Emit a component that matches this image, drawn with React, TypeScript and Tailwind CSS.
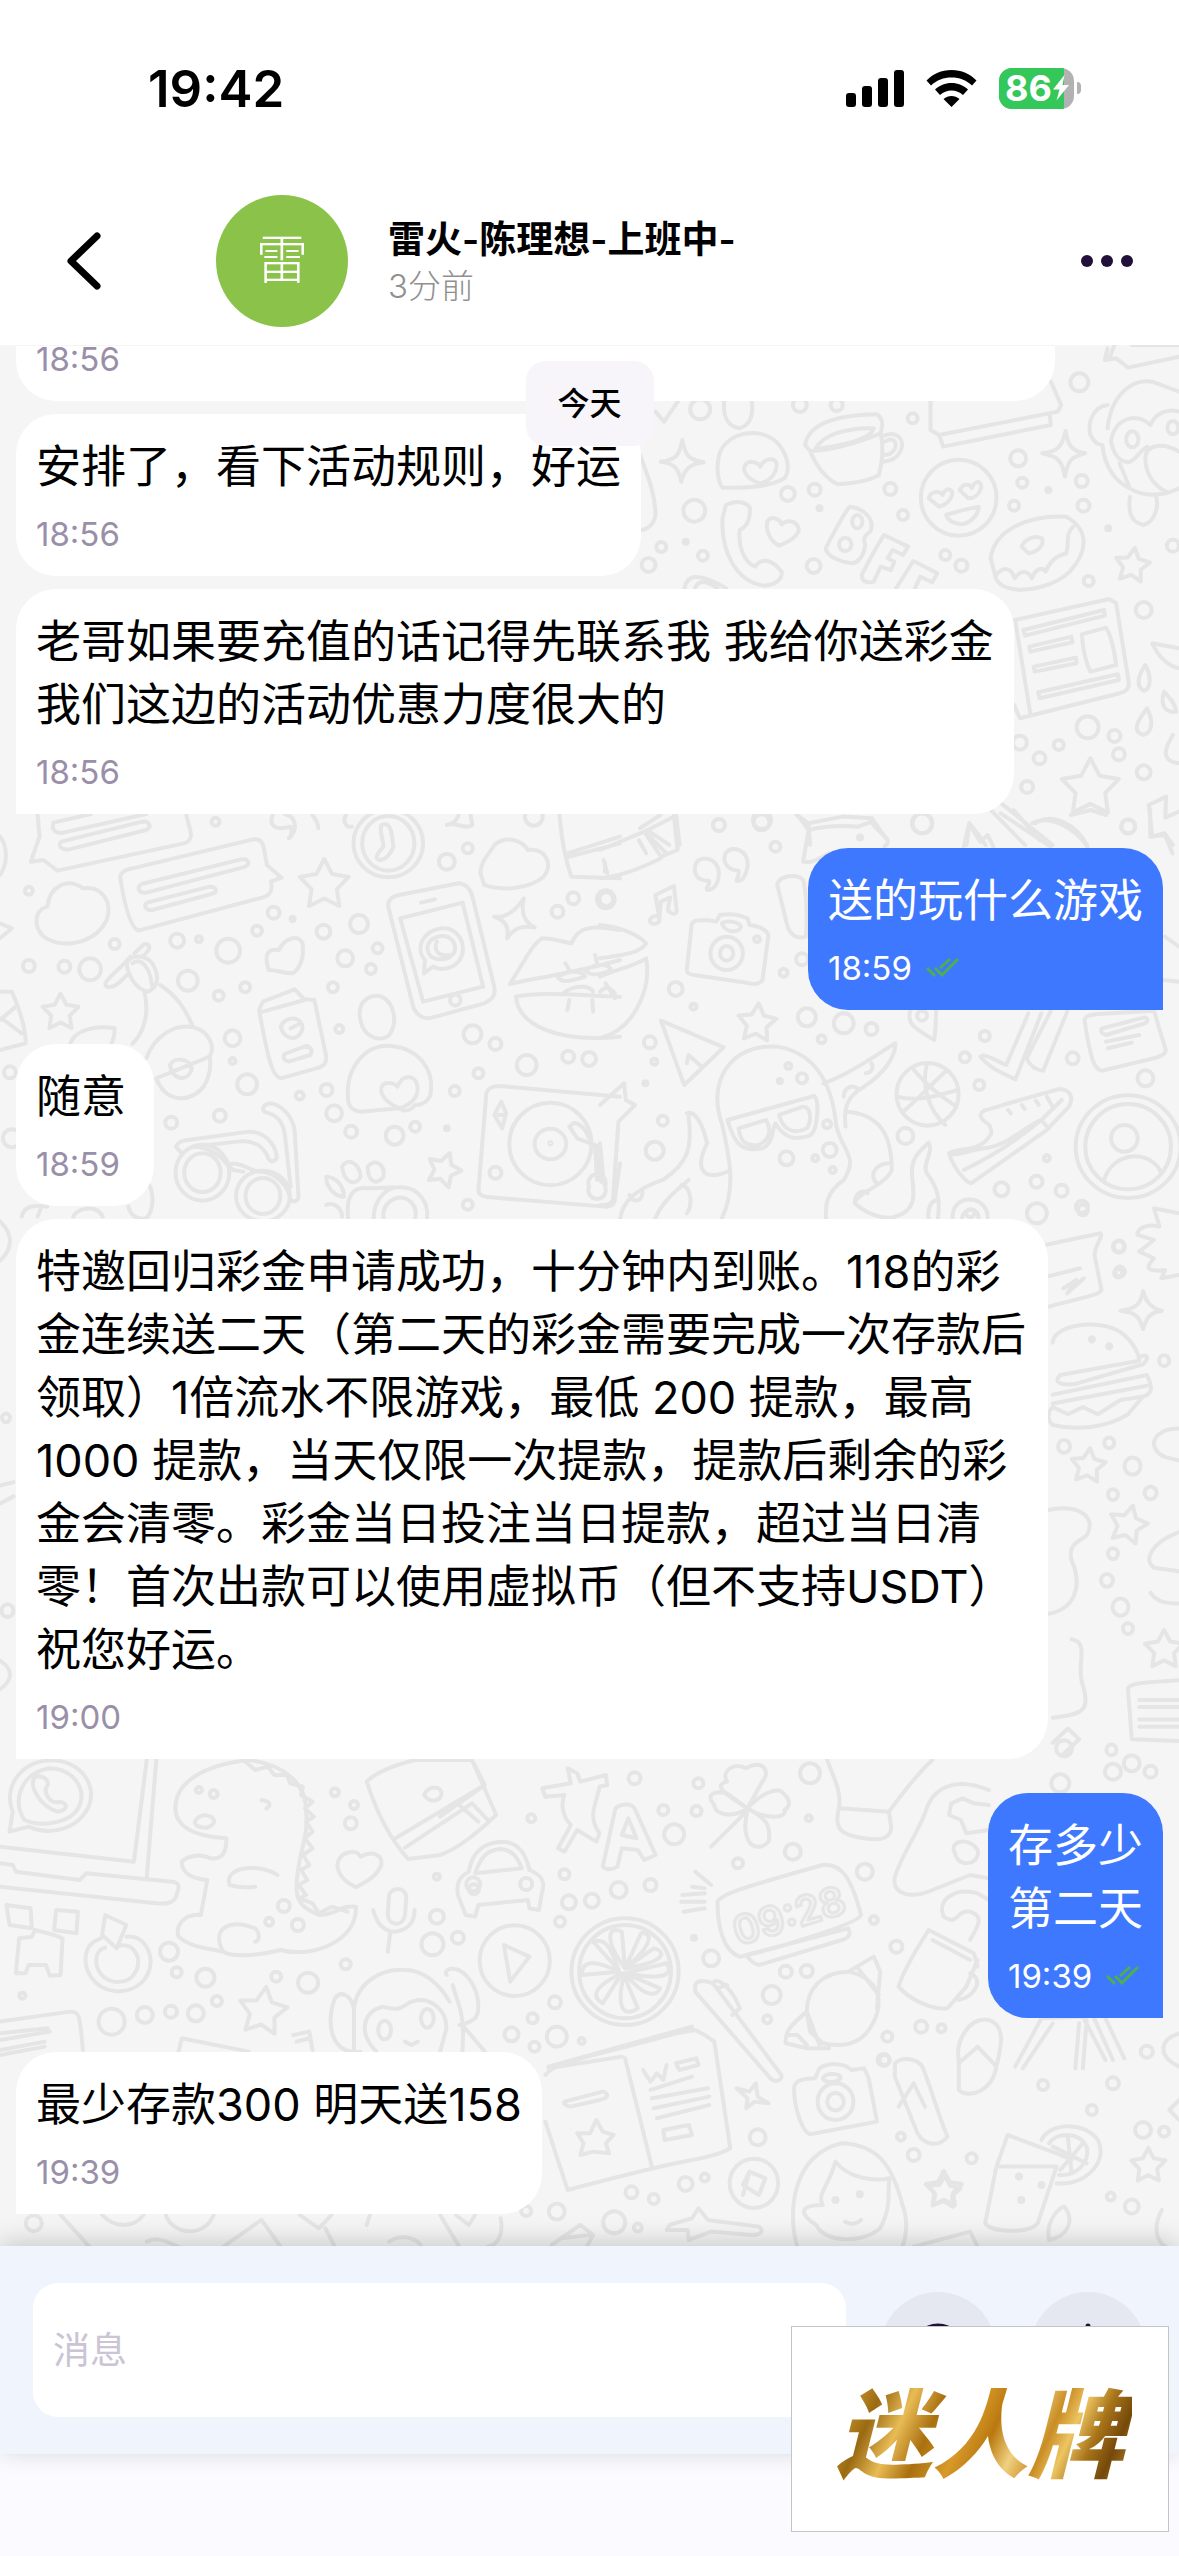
import React from "react";
import clsx from "clsx";

const ink = "fill-none stroke-[#e5e5e5]";

type Pt = [number, number, number];

/** Round bubbles scattered between the doodles; radii are compensated for the group scale. */
function Dots({ items, sx }: { items: Pt[]; sx: number }) {
  return (
    <>
      {items.map(([x, y, r]) => (
        <ellipse key={`${x}-${y}`} cx={x} cy={y} rx={r * sx} ry={r * 3} vectorEffect="non-scaling-stroke" />
      ))}
    </>
  );
}

/** A list of outline strokes sharing one group scale. */
function Lines({ d }: { d: string[] }) {
  return (
    <>
      {d.map((p) => (
        <path key={p} d={p} vectorEffect="non-scaling-stroke" />
      ))}
    </>
  );
}

function Star({ x, y, r, sx, sy = 3, a = 0 }: { x: number; y: number; r: number; sx: number; sy?: number; a?: number }) {
  const pts = Array.from({ length: 10 }, (_, i) => {
    const rad = ((i * 36 - 90 + a) * Math.PI) / 180;
    const k = i % 2 ? r * 0.52 : r;
    return `${x + Math.cos(rad) * k * sx},${y + Math.sin(rad) * k * sy}`;
  }).join(" ");
  return <polygon points={pts} vectorEffect="non-scaling-stroke" />;
}

function Wallpaper() {
  return (
    <svg
      aria-hidden="true"
      className={clsx("absolute inset-0 h-full w-full", ink)}
      viewBox="0 345 1179 1901"
      preserveAspectRatio="xMidYMin slice"
      strokeWidth="4"
      strokeLinecap="round"
      strokeLinejoin="round"
    >
      {/* upper right: cup, smiley, donut, newspaper, monkey */}
      <g transform="translate(640 345) scale(0.3438 0.3333)">
        <Lines
          d={[
            "M480 300C490 240 560 210 690 208C710 225 705 245 700 265C640 290 560 315 495 318ZM495 318C510 360 540 400 575 418C620 415 670 405 695 390C705 350 708 300 700 262M510 312C530 270 600 248 680 250C670 280 600 300 510 312",
            "M702 275C740 255 765 275 762 305C755 335 735 350 702 350M712 290C735 275 748 290 742 310C736 325 725 330 710 330",
            "M240 428C220 400 220 330 245 300C290 250 370 255 405 300C435 340 435 380 420 400C380 425 300 430 240 428ZM350 415C300 400 290 360 320 350C345 350 350 365 350 365C360 340 390 335 397 355C400 385 375 410 350 415",
            "M845 165V255L870 270L882 305L1195 240L1192 208M870 270L1215 200L1225 180L1195 110",
            "M840 460C845 440 870 435 880 450C890 425 910 430 908 448C905 465 890 480 870 485ZM930 435C940 415 960 415 965 430C975 405 995 405 992 430C985 450 970 460 955 460ZM890 510C920 500 960 490 985 485C985 510 960 535 935 538C910 535 895 525 890 510Z",
            "M1020 640C1030 560 1120 510 1240 515C1300 550 1310 610 1250 680C1190 740 1060 755 1035 700ZM1035 690C1060 660 1080 670 1090 700C1110 670 1130 680 1140 700C1150 670 1170 665 1180 680C1195 640 1220 630 1240 625C1250 590 1235 570 1260 545",
            "M1110 605C1120 580 1150 570 1170 580C1175 600 1160 620 1130 625Z",
            "M250 480C280 465 310 470 320 490C320 520 315 545 290 555C285 600 300 650 335 665C355 635 385 645 412 680C415 705 390 720 360 722C280 710 235 620 240 520Z",
            "M370 530C380 510 405 520 412 538C430 520 460 530 462 555C455 580 430 590 405 602C380 590 365 560 370 530Z",
            "M540 610C560 570 590 510 610 485C650 490 685 520 670 560C650 575 650 580 655 600C650 640 630 655 615 655C580 650 545 635 540 610Z",
            "M645 690C665 650 690 600 710 570L780 605L765 630L735 615L720 640L740 650L730 675L700 665L680 710C660 715 645 710 645 690Z",
            "M745 730L795 648L865 685L850 712L815 695L800 730",
            "M1090 825L1365 762L1385 775L1422 1015C1422 1035 1410 1040 1395 1045L1105 1120L1088 1080M1092 830L1135 1105",
            "M1115 855L1350 795L1352 812L1120 872ZM1132 905L1255 875L1258 892L1135 920ZM1145 965L1268 938L1270 955L1148 980ZM1158 1042L1390 988L1393 1005L1162 1060ZM1285 868L1355 848C1370 870 1380 920 1385 960L1310 980C1295 950 1288 910 1285 868Z",
            "M1360 250C1370 150 1430 100 1490 110L1568 140M1360 180C1320 185 1300 230 1310 270C1320 290 1330 300 1345 300C1350 360 1380 410 1425 430M1370 290C1380 220 1440 200 1485 240C1500 200 1540 190 1568 200M1370 290C1380 340 1400 350 1420 352C1440 350 1450 320 1475 305M1395 355L1425 430C1470 460 1530 450 1568 430M1470 340C1470 300 1520 290 1568 320M1470 340C1470 380 1490 420 1530 440M1425 455C1420 500 1425 530 1465 540C1500 530 1510 480 1500 450",
            "M60 350C100 345 115 335 123 285C132 335 145 345 185 352C145 358 130 370 120 410C112 370 100 355 60 350Z",
            "M1170 325C1215 320 1228 305 1238 258C1245 305 1260 320 1295 325C1255 335 1245 345 1236 395C1228 345 1215 335 1170 325Z",
            "M245 170C240 220 260 245 290 250C320 240 330 210 325 170M45 200L70 230L110 170M0 330C25 400 45 450 45 510C40 540 20 555 0 555M130 730C135 690 170 680 250 730M160 730C170 705 190 705 225 730",
            "M1360 10L1352 45L1385 40L1420 68L1568 35M1380 0L1365 40M1430 0L1568 0",
            "M1490 895L1568 910M1490 895C1510 940 1540 965 1568 970M1470 960C1450 990 1440 1020 1465 1038C1490 1030 1485 990 1470 960ZM1475 1090C1445 1130 1430 1160 1465 1170C1495 1160 1490 1120 1475 1090ZM1525 1040C1510 1080 1530 1105 1560 1100C1555 1070 1540 1060 1525 1040ZM1550 1170C1520 1220 1520 1250 1568 1255",
            "M1480 1380L1530 1355L1528 1418L1568 1400M1480 1380L1490 1475L1525 1465L1550 1500",
            "M455 1410L490 1435L495 1500M490 1435L590 1415L675 1420L715 1480M0 1450L60 1410M20 1455L85 1500M105 1410L115 1500M950 1500L958 1435L985 1470L1005 1500M1045 1370L1200 1500M1020 1395L1120 1500M1150 1435C1200 1400 1270 1440 1300 1500",
          ]}
        />
        <ellipse cx="927" cy="458" rx="110" ry="114" vectorEffect="non-scaling-stroke" />
        <ellipse cx="632" cy="530" rx="15" ry="20" vectorEffect="non-scaling-stroke" />
        <ellipse cx="597" cy="598" rx="18" ry="20" vectorEffect="non-scaling-stroke" />
        <ellipse cx="1432" cy="283" rx="18" ry="24" vectorEffect="non-scaling-stroke" />
        <ellipse cx="1550" cy="248" rx="16" ry="20" vectorEffect="non-scaling-stroke" />
        <Star x={1432} y={662} r={18} sx={2.9} a={8} />
        <Star x={1310} y={1330} r={30} sx={2.9} />
        <Dots
          sx={2.9}
          items={[
            [175, 193, 10], [465, 180, 7], [572, 180, 6], [793, 220, 5], [1278, 112, 9], [1100, 340, 8], [158, 497, 11],
            [430, 447, 7], [508, 434, 6], [728, 432, 6], [522, 490, 2], [765, 510, 5], [1112, 413, 5], [1188, 435, 2],
            [1285, 408, 6], [1088, 482, 5], [1290, 482, 6], [1362, 550, 2], [62, 606, 5], [133, 590, 2], [183, 632, 5],
            [25, 660, 7], [505, 663, 7], [888, 630, 5], [935, 662, 6], [1305, 708, 5], [1465, 795, 8], [1550, 602, 6],
            [1302, 1147, 11], [1380, 1173, 6], [1105, 1193, 7], [1218, 1200, 5], [1162, 1240, 6], [1393, 1228, 6],
            [1465, 1282, 7], [1126, 1326, 6], [1420, 1444, 7], [820, 1435, 10], [355, 1425, 9], [230, 1440, 6], [640, 1478, 2],
          ]}
        />
      </g>

      {/* middle left: chat balloons, phone, lips, lamp, glasses, turntable */}
      <g transform="translate(0 810) scale(0.3954 0.3333)">
        <Lines
          d={[
            "M95 10L100 80L78 155L110 150L145 182L465 100C480 95 485 80 482 65L470 10M135 38L230 12M135 38C130 60 140 72 160 68L370 12M155 95L360 35C378 32 385 50 370 60L175 118C155 122 145 105 155 95Z",
            "M305 210C300 190 315 180 335 175L640 88C660 85 665 100 668 120L675 165L712 203L685 215C690 240 685 255 665 262L350 362C335 355 320 320 305 210ZM358 222L610 148C630 145 635 165 615 172L370 248C350 250 345 232 358 222ZM372 278L530 230C550 230 550 248 535 252L385 300C368 302 362 285 372 278Z",
            "M120 290C125 230 170 200 210 235C260 225 285 280 270 330C240 400 160 420 110 380C85 350 85 300 120 290Z",
            "M965 45C985 35 990 55 995 110C990 130 975 150 960 150C945 145 955 130 970 110C968 80 958 60 965 45Z",
            "M982 290C980 270 990 260 1010 255L1160 220C1180 222 1190 240 1195 260L1250 530C1255 555 1245 570 1225 580L1085 625C1065 625 1050 610 1045 590ZM1012 325L1170 278L1222 530L1070 575ZM1065 278L1100 268M1138 570A13 16 0 1 0 1165 570A13 16 0 1 0 1138 570",
            "M1115 355C1150 350 1175 385 1170 430C1160 475 1120 485 1095 470L1072 490L1075 450C1050 420 1065 365 1115 355ZM1115 378C1140 375 1155 400 1150 425C1135 455 1105 450 1090 440C1070 410 1085 385 1115 378ZM1105 395C1095 420 1110 440 1135 435",
            "M1215 190C1215 150 1240 130 1250 105C1280 75 1320 90 1335 120C1380 115 1400 160 1375 200C1340 235 1270 245 1225 225Z",
            "M1290 520C1320 470 1340 410 1370 385C1400 385 1420 395 1445 400C1460 360 1480 340 1568 360M1290 522C1350 505 1450 490 1568 450M1305 560C1360 545 1450 555 1568 560M1305 560C1310 640 1400 700 1568 680M1410 500C1440 480 1470 480 1480 500C1440 515 1420 520 1410 500ZM1480 480C1510 460 1540 460 1545 480C1520 495 1490 500 1480 480ZM1425 550C1450 525 1490 525 1500 545M1430 460L1440 480M1505 435L1510 460M1440 570L1435 600M1498 570L1500 605",
            "M1250 320C1280 325 1305 300 1325 265C1315 310 1330 340 1352 352C1320 345 1300 355 1282 385C1290 350 1275 330 1250 320Z",
            "M270 530C260 520 270 510 315 460L330 440M270 530C290 535 300 520 325 490M340 430L365 402C380 400 385 415 360 440M320 460C330 430 370 435 385 460C405 500 400 530 375 545C345 540 325 500 320 460ZM335 460C355 440 380 470 385 530M365 545C380 620 360 670 335 702M405 525C450 560 470 600 488 650M370 745C390 680 440 640 490 652C530 665 545 710 530 740L395 805M395 805C420 880 480 880 515 830C530 800 535 770 530 740M430 765C440 740 480 745 485 775C480 815 435 815 430 765ZM178 700C190 660 240 645 290 655C290 680 285 695 280 705",
            "M655 600L665 575L745 538L770 568L795 570C800 600 815 680 825 740C825 765 815 770 800 775L710 805C690 800 680 760 655 600ZM665 605L770 570M720 732L775 708C790 715 790 725 785 735L730 755C715 750 715 740 720 732ZM710 650C720 620 760 615 765 650C765 690 720 700 710 650M735 655L760 640",
            "M910 620C905 570 940 550 965 560C1000 580 1005 640 985 675C960 700 915 680 910 620Z",
            "M880 860C875 780 920 700 990 708C1060 715 1095 780 1090 840C1090 870 1070 885 1050 885C1035 905 1020 905 1010 895L910 905C890 900 880 890 880 860ZM1010 895C960 870 955 830 975 820C995 815 1000 825 1005 830C1020 790 1050 795 1055 825C1060 850 1050 880 1010 895",
            "M445 1010C450 995 460 992 475 990L630 965C680 965 700 1020 700 1045C690 1060 680 1055 675 1035C660 1000 630 990 600 995L490 1010M445 1010L460 1030M490 1010C530 1010 560 1040 575 1065C610 1050 640 1090 660 1085C700 1090 730 1130 735 1170C745 1180 755 1170 755 1160L745 960C740 920 710 880 680 880C660 890 660 905 680 910C710 920 720 950 722 990L735 1130M575 1065L590 1080L615 1085",
            "M680 480C665 430 680 415 705 420C720 385 755 370 765 400C770 440 760 475 740 490C715 490 700 480 680 480Z",
            "M1230 850C1235 830 1250 828 1265 828L1568 860M1230 850L1210 1140C1210 1155 1220 1160 1240 1162L1530 1190C1550 1190 1555 1180 1555 1165L1568 1060M1440 950L1460 985L1515 1010L1520 1115M1445 945C1455 930 1480 950 1490 985M1505 1010L1510 1110M1490 1130A22 26 0 1 0 1530 1130A22 26 0 1 0 1490 1130M1268 875L1250 915L1270 955L1280 910ZM1262 915H1275",
            "M825 1100C850 1100 870 1130 870 1160C845 1160 825 1130 825 1100ZM865 1070C880 1040 910 1060 912 1100C900 1130 870 1120 865 1070ZM930 1070C945 1045 975 1060 970 1100C955 1125 930 1120 930 1070ZM825 1185C845 1175 865 1195 865 1220M880 1225C875 1160 890 1130 930 1135L1010 1132C1060 1130 1085 1180 1080 1225M945 1225C945 1160 985 1130 1010 1132M970 1225C965 1180 1000 1155 1025 1165C1050 1180 1055 1200 1050 1225",
            "M1415 15C1420 90 1430 150 1445 200L1568 205M1440 140L1568 100M1435 130L1568 80M1530 160V185",
            "M0 545H30C50 600 65 660 65 700L0 720M0 630L40 590M10 630L55 670M0 340L30 355L0 385M0 80C20 110 20 160 0 195",
            "M55 1220C60 1190 80 1185 120 1190M95 1220L105 1190M185 1220C200 1190 245 1185 260 1220M325 1190C330 1220 350 1230 370 1225C390 1200 390 1150 375 1120",
            "M690 15C680 40 690 65 735 50C740 70 735 85 730 85M720 12C750 20 755 60 730 85M790 15C800 30 805 45 805 55M875 15C865 30 875 55 890 50",
            "M1130 45C1150 40 1155 30 1160 15M1130 45C1150 35 1180 60 1195 45L1190 15",
          ]}
        />
        <ellipse cx="982" cy="100" rx="88" ry="102" vectorEffect="non-scaling-stroke" />
        <ellipse cx="982" cy="100" rx="66" ry="82" vectorEffect="non-scaling-stroke" />
        <ellipse cx="512" cy="1088" rx="68" ry="84" vectorEffect="non-scaling-stroke" />
        <ellipse cx="512" cy="1088" rx="46" ry="58" vectorEffect="non-scaling-stroke" />
        <ellipse cx="665" cy="1158" rx="68" ry="76" vectorEffect="non-scaling-stroke" />
        <ellipse cx="665" cy="1158" rx="44" ry="54" vectorEffect="non-scaling-stroke" />
        <ellipse cx="1392" cy="1002" rx="104" ry="124" vectorEffect="non-scaling-stroke" />
        <ellipse cx="1392" cy="1002" rx="40" ry="46" vectorEffect="non-scaling-stroke" />
        <Star x={820} y={225} r={26} sx={2.5} />
        <Star x={153} y={608} r={19} sx={2.5} />
        <Star x={1122} y={1080} r={18} sx={2.5} a={20} />
        <Dots
          sx={2.5}
          items={[
            [73, 242, 4], [545, 35, 4], [1130, 155, 8], [1183, 115, 5], [692, 308, 6], [740, 327, 2], [650, 362, 5],
            [818, 365, 7], [908, 342, 9], [290, 402, 5], [448, 392, 7], [503, 388, 3], [577, 422, 12], [73, 468, 6],
            [163, 470, 6], [228, 478, 11], [475, 512, 10], [873, 445, 8], [955, 415, 5], [938, 477, 5], [620, 532, 5],
            [553, 557, 5], [842, 532, 5], [588, 685, 8], [858, 657, 4], [588, 753, 3], [1195, 673, 9], [1253, 702, 6],
            [1332, 765, 10], [1437, 740, 6], [1490, 747, 7], [1210, 790, 5], [625, 823, 10], [758, 857, 4], [826, 840, 6],
            [1150, 843, 5], [845, 910, 8], [433, 938, 6], [556, 917, 6], [888, 965, 6], [998, 977, 9], [1050, 950, 5],
            [1130, 955, 2], [1253, 1088, 6], [1183, 1184, 5], [1392, 1000, 1], [1410, 305, 6], [1450, 265, 6],
            [1532, 268, 9], [25, 787, 6], [30, 985, 9], [1350, 20, 9],
          ]}
        />
      </g>

      {/* middle right: camera, octopus, basketball, sneaker, contact */}
      <g transform="translate(600 810) scale(0.3693 0.3333)">
        <Lines
          d={[
            "M0 120L120 65L165 140L210 120L200 15M120 65L200 20M130 75L180 130M0 205C60 200 120 170 165 145M105 90L125 130M10 150L20 190",
            "M260 160C270 135 320 140 322 190C320 220 310 240 290 240C285 230 300 225 295 212C265 215 250 190 260 160ZM340 130C355 105 400 115 400 165C395 200 385 215 370 212C370 200 380 195 375 182C345 180 330 155 340 130Z",
            "M135 330C140 315 155 318 160 320L150 255L200 228L208 305C200 320 180 305 185 290L190 262L165 275L160 335C150 345 135 345 135 330",
            "M235 480L248 345C250 330 265 330 290 330L315 335L325 315C350 310 380 315 400 325L405 345C440 350 460 365 455 385L440 510C435 520 420 525 405 520L255 495C240 492 235 490 235 480ZM330 340C345 330 375 335 382 350C375 370 340 370 330 340Z",
            "M480 225C485 195 535 190 550 210C560 250 560 330 558 380C530 390 515 370 508 350Z",
            "M165 632L335 712L228 825ZM240 735L275 770M240 735L235 760",
            "M330 940C290 820 350 700 480 710C590 730 630 830 640 950C660 1030 700 1040 660 1110C610 1150 610 1190 612 1225M605 820C680 790 740 740 800 700C800 740 770 790 715 830C665 860 660 900 665 950M330 940C350 1040 370 1130 330 1225M665 905C760 910 790 980 790 1080C770 1130 690 1150 690 1180C740 1230 790 1225 800 1220C860 1200 850 1150 845 1100C840 1040 870 1020 890 998C905 1030 870 1060 885 1090C920 1140 920 1180 915 1225M235 910C260 900 280 950 290 1000C250 1090 290 1110 345 1085M240 920C250 1010 240 1060 170 1110C90 1140 60 1180 55 1225M150 1225C170 1170 210 1140 240 1110M660 860C660 830 690 820 700 840M780 1060C740 1065 730 1100 750 1120M720 790C740 785 740 770 735 760M220 1125C250 1130 250 1190 235 1210M80 1155C95 1185 115 1170 115 1145M690 1180C690 1140 720 1140 725 1150M890 1225C885 1190 900 1170 915 1170",
            "M345 930L580 858C595 870 590 960 570 975C520 1000 490 970 475 940C465 960 470 1000 440 1015C370 1030 360 980 345 930ZM375 955L450 930C465 960 460 990 430 1005C390 1010 380 990 375 955ZM485 915L550 890C570 890 575 930 560 955C525 975 495 960 485 915Z",
            "M1030 915C1035 895 1060 900 1090 885L1240 838C1270 835 1285 860 1270 890L1210 960L1005 1120C990 1115 960 1080 945 1030C980 1010 1030 1030 1060 970C1060 930 1035 945 1030 915ZM945 1030C970 1040 1000 1020 1040 1015C1100 1010 1150 950 1195 930L1250 870M985 1080C1060 1040 1130 990 1195 930M1195 930L1215 955M1210 860L1225 890M1105 900L1112 910M1142 885L1150 897M1180 872L1188 885",
            "M885 762C870 830 890 900 935 945M805 860C860 880 930 850 970 840M850 780C880 820 910 850 965 890M820 905C850 880 900 820 940 780",
            "M1030 740C1040 730 1060 745 1100 765L1160 610M1030 740C1050 770 1090 790 1125 808L1195 610M1155 745L1220 605M1155 745C1165 770 1180 780 1200 782L1265 605",
            "M1312 630C1315 615 1330 615 1350 612L1500 602L1532 720C1530 735 1520 738 1500 745L1360 782C1340 780 1330 760 1312 630ZM1360 655L1475 622C1485 625 1485 635 1475 640L1370 675C1355 670 1355 660 1360 655ZM1370 695L1460 675M1375 715L1440 698",
            "M1365 1110C1390 1020 1490 1020 1518 1085M840 602C830 640 850 655 905 690C910 650 910 620 910 600M0 345C50 350 100 370 125 400C110 430 60 435 0 445M0 500C40 480 90 470 125 445C140 540 90 660 0 685M0 545C15 530 25 530 40 550M15 520L40 565",
            "M0 885L65 820L70 870L95 885L50 935M50 935L35 1170C30 1185 15 1185 0 1185M0 1000L10 1120",
            "M955 1225C950 1150 1050 1150 1050 1225M980 1225C985 1190 1025 1190 1025 1225M1205 1305L1355 1270C1365 1280 1335 1310 1340 1340L1358 1440C1355 1450 1340 1455 1320 1460L1215 1490M1210 1400L1300 1375M1255 1435L1290 1410L1265 1450L1310 1405",
            "M1568 1210L1500 1195L1515 1250C1480 1240 1455 1255 1455 1275L1500 1290L1460 1325L1500 1345C1470 1380 1490 1385 1530 1380L1520 1405L1568 1395",
            "M535 15L565 60L550 155C570 160 590 150 620 130M565 60C600 50 650 45 700 50L735 35C750 70 800 85 770 110M985 110L1000 40C1010 60 1020 80 1030 95L1050 75L1065 110M1085 10L1220 110M1170 40C1220 10 1290 60 1320 110M1490 0V80L1530 75L1550 130M1120 0L1190 90M1275 15L1330 0L1370 15M1530 380L1568 410M1525 510L1568 515",
          ]}
        />
        <ellipse cx="343" cy="430" rx="44" ry="50" vectorEffect="non-scaling-stroke" />
        <ellipse cx="343" cy="430" rx="18" ry="22" vectorEffect="non-scaling-stroke" />
        <ellipse cx="887" cy="853" rx="84" ry="94" vectorEffect="non-scaling-stroke" />
        <ellipse cx="1430" cy="1010" rx="142" ry="154" vectorEffect="non-scaling-stroke" />
        <ellipse cx="1430" cy="1010" rx="116" ry="128" vectorEffect="non-scaling-stroke" />
        <ellipse cx="1420" cy="985" rx="36" ry="40" vectorEffect="non-scaling-stroke" />
        <Star x={425} y={640} r={20} sx={2.7} a={5} />
        <Dots
          sx={2.7}
          items={[
            [322, 45, 6], [437, 37, 8], [475, 110, 5], [873, 40, 10], [1430, 50, 7], [17, 268, 7], [205, 537, 7],
            [497, 488, 4], [253, 590, 3], [425, 388, 3], [547, 448, 6], [560, 622, 9], [660, 640, 10], [735, 657, 6],
            [600, 688, 4], [872, 617, 5], [1042, 678, 5], [135, 697, 6], [147, 755, 3], [123, 820, 2], [510, 768, 3],
            [487, 813, 2], [547, 805, 5], [988, 742, 5], [1280, 745, 6], [1027, 825, 5], [1477, 805, 8], [170, 932, 5],
            [148, 1022, 9], [827, 978, 8], [615, 943, 4], [622, 1020, 7], [583, 1045, 3], [630, 1080, 3], [1210, 1045, 3],
            [1087, 1138, 7], [1182, 1115, 6], [1250, 1142, 6], [1305, 1190, 6], [1183, 1210, 10], [1003, 1210, 4],
            [1405, 1310, 6], [1408, 1385, 5], [505, 1045, 7],
          ]}
        />
      </g>

      {/* right margin: burger, sparkles, small ornaments */}
      <g transform="translate(0 1200) scale(0.752 0.3571)">
        <Lines
          d={[
            "M1400 400C1400 350 1460 330 1490 370C1510 400 1515 440 1515 450L1410 490M1410 490C1400 510 1410 520 1430 515L1520 460C1530 440 1525 430 1515 440M1400 545L1525 490C1535 530 1530 545 1520 550L1500 600C1470 640 1430 645 1400 630C1390 610 1395 590 1400 580L1420 600L1440 580L1460 600L1490 560L1520 550M1400 570L1525 520",
            "M1490 310C1510 305 1518 290 1520 255C1525 295 1535 305 1545 310C1530 315 1525 325 1520 362C1515 325 1510 315 1490 310",
            "M1568 640C1530 640 1525 700 1550 720L1568 730M1390 870C1430 850 1460 880 1445 940C1430 960 1420 970 1425 1010C1440 1080 1430 1150 1390 1160M1568 930C1530 960 1520 1010 1535 1030L1568 1040M1530 1100C1540 1130 1555 1130 1568 1130M1425 1230C1450 1240 1430 1300 1440 1360C1450 1430 1440 1440 1400 1450M1400 1520L1420 1480L1435 1510L1415 1550",
            "M1500 1370C1500 1355 1510 1352 1568 1345M1500 1370L1505 1510L1568 1515M1515 1400H1568M1515 1420H1568M1515 1455H1568M1515 1475H1568",
            "M0 60C15 90 20 130 0 170M0 800L18 790M0 850L18 830M0 1290C15 1310 20 1340 0 1370",
          ]}
        />
        <Star x={1447} y={745} r={18} sx={1.33} sy={2.8} a={6} />
        <Star x={1500} y={910} r={20} sx={1.33} sy={2.8} a={14} />
        <Star x={1548} y={1260} r={20} sx={1.33} sy={2.8} />
        <Dots
          sx={1.33}
          items={[
            [1488, 130, 5], [1487, 205, 4], [1452, 390, 2], [1475, 410, 2], [1548, 450, 5], [1475, 680, 5], [1415, 690, 6],
            [1506, 745, 8], [1480, 825, 5], [1530, 820, 6], [1480, 990, 5], [1472, 1065, 6], [1490, 1140, 8],
            [1500, 1200, 5], [1478, 1540, 5], [1440, 28, 5], [8, 610, 4], [10, 1150, 6],
          ]}
        />
      </g>

      {/* lower left: dinosaur, car, gift, orange, monkey, notebook, portrait */}
      <g transform="translate(0 1755) scale(0.6378 0.3333)">
        <Lines
          d={[
            "M15 230L20 170C5 100 30 20 80 15C130 20 150 90 140 150C125 220 80 245 45 215ZM38 195C20 140 30 60 75 40C115 40 135 100 125 150C115 200 70 220 38 195ZM55 65C45 90 60 150 90 170C105 165 108 150 95 140C80 150 70 120 72 100C80 80 70 60 55 65Z",
            "M230 15L210 320L0 275M245 15L230 370M0 325L20 330L25 350L125 375L135 355L270 380C285 385 280 400 275 430C270 445 260 448 245 445L0 395",
            "M390 15C320 30 275 80 275 160C275 220 310 245 355 250C355 290 350 315 330 310C310 290 290 310 285 320C285 355 300 370 325 375L315 480C285 475 275 520 280 545C300 580 330 580 350 590C360 605 400 605 440 585C490 610 560 560 558 455C530 450 530 480 500 480C475 460 465 440 465 400C465 300 485 250 480 170C480 90 450 30 390 15ZM360 390C350 340 400 320 435 360M360 390C375 398 390 398 400 395M350 590C330 520 360 490 400 520C410 540 405 560 400 560M320 180C300 190 300 220 325 218C340 205 340 185 320 180ZM410 135C425 140 425 150 418 160",
            "M385 20L400 45L420 35L430 60L450 60L455 85L475 95L472 120L490 140L478 160L492 185L480 200L490 230L478 250L490 280L475 300L485 330L472 345L482 375L468 390L480 420L470 430L490 445L500 475L520 455L545 470",
            "M575 80C590 50 620 30 650 15L740 15L778 180C750 230 720 280 690 300L640 312C620 270 595 200 575 80ZM620 250L760 90M635 278L740 145L765 195M720 150L750 200M665 120C670 90 695 90 692 120C688 140 675 145 665 120ZM740 15L760 90L690 185",
            "M530 320C535 290 560 280 565 305C585 285 600 300 598 330C590 365 575 380 558 397C540 380 525 350 530 320Z",
            "M735 350C740 290 760 260 790 260C815 265 825 300 830 345C850 360 855 380 850 410L845 465L830 460L828 435L750 450L745 485L730 480L718 420C715 385 720 365 735 350ZM745 355C755 300 765 285 785 282C805 285 812 310 818 340Z",
            "M610 420C615 395 635 395 637 425L635 480C632 515 610 515 608 480ZM585 465C590 500 600 530 620 530C640 525 650 500 650 465M612 530L608 590",
            "M10 450L48 460L50 520L15 510ZM88 465L122 470L120 535L85 525ZM30 550L50 545L55 525L85 540L98 550L95 660L78 662L72 630L45 630L40 655L25 655Z",
            "M198 545C225 540 240 590 235 640C228 690 205 712 180 708C145 700 130 640 135 595C138 570 145 558 158 550M188 572C208 565 220 600 216 635C210 672 195 685 178 680C155 670 148 630 152 600C154 590 158 582 165 578M165 480L198 510L183 580L160 540Z",
            "M790 570L830 605L800 680Z",
            "M980 640L975 530C955 510 945 550 980 640ZM980 640L1005 535C1020 530 1030 560 980 640ZM980 640L1025 580C1045 590 1045 620 980 640ZM980 655L1045 625C1055 650 1050 680 980 655ZM980 655L1035 700C1030 725 1010 730 980 655ZM978 660L1000 760C980 785 965 770 978 660ZM975 655L945 745C930 730 925 700 975 655ZM970 650L912 660C912 620 930 610 970 650ZM970 645L930 560C945 550 955 560 970 645Z",
            "M565 890C520 900 510 810 525 730C535 705 550 720 555 760C560 680 600 640 635 645C665 645 690 690 705 740M700 660C695 640 715 630 730 660C750 700 755 760 745 790C730 810 720 810 720 810M555 760L555 890M590 890C560 830 570 770 600 755C620 765 625 765 640 745C670 715 700 760 700 820L690 890M725 810L760 890M710 690C715 740 730 760 725 890M635 860L645 870L655 860",
            "M855 960C870 920 920 910 1060 835L1090 825L1105 840L1120 860L1145 1180C1120 1210 1060 1220 1025 1240C980 1260 920 1290 890 1305L855 1100M860 935L1085 815M980 910L1022 1235M860 940L975 905",
            "M885 1040L945 1010C955 1015 955 1030 940 1035L895 1055C885 1052 883 1045 885 1040ZM1020 1005L1085 965M1022 1030L1110 1000M1025 1060L1112 1025M1030 1090L1112 1050M1040 1125L1080 1110L1085 1140L1042 1155ZM905 1135L925 1135L935 1095L945 1130L962 1140L950 1165L955 1195L930 1190L910 1200L915 1165Z",
            "M1008 945L1020 980L1030 955L1040 975L1045 930M1060 925L1092 910L1095 930L1065 945Z",
            "M1090 690C1095 670 1115 680 1120 690L1225 960C1228 975 1215 985 1208 970L1090 710ZM1120 680C1130 670 1150 710 1160 760L1148 780M1125 700L1140 690",
            "M1125 440C1130 420 1150 405 1290 330C1320 325 1335 370 1350 480C1345 510 1180 600 1160 605C1135 590 1125 520 1125 440ZM1170 600L1330 520C1335 540 1330 550 1320 555L1190 630C1180 625 1175 615 1170 600Z",
            "M850 100L895 85L890 40L905 55L910 80L950 60L952 90L940 95C935 150 920 180 940 235L935 260L905 225L885 290L875 280L895 210C880 180 880 140 885 120L855 125Z",
            "M945 335L965 160C975 145 990 145 995 160L1028 300L1010 315L1000 285L975 280L968 335C960 345 950 345 945 335ZM975 240L985 190L998 250Z",
            "M1172 160C1130 110 1120 90 1140 80C1130 50 1150 20 1170 40C1195 10 1210 50 1195 80L1172 160ZM1172 160C1195 110 1220 100 1225 110C1245 140 1235 160 1230 165C1235 190 1200 195 1172 160ZM1172 160C1200 190 1210 210 1205 260C1190 290 1175 270 1172 250C1165 220 1170 190 1172 160ZM1172 160C1150 190 1120 180 1120 150C1105 120 1120 105 1140 115ZM1170 170L1115 275",
            "M1245 1000C1245 975 1260 970 1278 970L1285 940C1300 920 1325 925 1335 945L1355 940L1362 970L1375 1100L1270 1138C1258 1130 1245 1060 1245 1000ZM1290 970C1295 950 1320 955 1318 970C1310 985 1295 985 1290 970Z",
            "M1265 770C1265 700 1290 650 1330 650C1380 670 1385 740 1370 800C1355 860 1330 880 1290 865L1270 830ZM1265 770C1240 810 1230 830 1232 865L1265 880L1300 880M1330 650L1370 605L1380 650L1375 760M1265 770L1285 870M1345 640L1378 720M1235 840H1250L1265 870",
            "M1250 1475C1235 1380 1240 1200 1320 1165C1380 1170 1400 1240 1415 1350C1425 1400 1420 1450 1415 1475M1310 1220C1330 1270 1370 1280 1395 1270M1310 1220C1300 1290 1280 1320 1290 1350C1250 1350 1255 1380 1280 1410C1290 1460 1350 1470 1380 1420C1400 1350 1390 1300 1395 1270M1325 1400C1335 1412 1345 1405 1350 1395",
            "M1155 1000L1175 1010L1185 985L1188 1025L1205 1045L1183 1040L1170 1060L1172 1030Z",
            "M1050 1410L1085 1390L1095 1360L1110 1395L1190 1415C1200 1430 1190 1440 1180 1440L1115 1430L1080 1455L1078 1425L1045 1425ZM1175 1250L1200 1270L1190 1320L1165 1290ZM1175 1250L1165 1320",
            "M1085 395L1105 400M1090 350L1115 390M1070 420L1105 415M1068 440H1105M1072 470L1105 460",
            "M0 800L110 770C125 770 125 780 130 885M0 835L75 820M0 855L78 830M0 885L70 860M0 900L70 875M280 890L285 850L390 890M460 840L485 830L490 885M465 860L485 850",
            "M95 1380L140 1475M160 1380C180 1420 210 1420 225 1380M260 1380C270 1440 320 1450 335 1380M350 1475L410 1395L440 1475M470 1380L500 1420L520 1380M510 1420L525 1475M575 1410L580 1380M690 1380L720 1475M715 1380L735 1410L745 1380M785 1390C790 1440 780 1470 765 1475M230 1460C250 1440 270 1470 280 1475M610 1460C635 1430 660 1460 660 1475M865 1470L910 1410L930 1440L920 1475M880 1450L925 1440",
          ]}
        />
        <ellipse cx="807" cy="617" rx="55" ry="106" vectorEffect="non-scaling-stroke" />
        <ellipse cx="980" cy="650" rx="84" ry="160" vectorEffect="non-scaling-stroke" />
        <ellipse cx="980" cy="650" rx="72" ry="140" vectorEffect="non-scaling-stroke" />
        <ellipse cx="1182" cy="1285" rx="38" ry="74" vectorEffect="non-scaling-stroke" />
        <ellipse cx="1310" cy="1040" rx="28" ry="55" vectorEffect="non-scaling-stroke" />
        <ellipse cx="1310" cy="1040" rx="13" ry="26" vectorEffect="non-scaling-stroke" />
        <ellipse cx="603" cy="825" rx="10" ry="28" vectorEffect="non-scaling-stroke" />
        <ellipse cx="670" cy="790" rx="10" ry="28" vectorEffect="non-scaling-stroke" />
        <Star x={412} y={770} r={25} sx={1.57} a={8} />
        <Star x={1480} y={1312} r={17} sx={1.57} a={5} />
        <Dots
          sx={1.57}
          items={[
            [312, 105, 3], [335, 117, 4], [525, 112, 4], [555, 150, 4], [550, 205, 6], [833, 190, 4], [995, 70, 6],
            [1040, 165, 5], [1057, 238, 10], [1095, 85, 5], [1092, 168, 5], [1270, 55, 10], [1243, 290, 8], [1268, 190, 3],
            [1157, 325, 5], [685, 365, 3], [743, 403, 5], [825, 387, 6], [885, 358, 5], [970, 405, 8], [1020, 390, 6],
            [892, 442, 7], [928, 437, 7], [685, 485, 7], [718, 548, 6], [678, 568, 11], [878, 500, 5], [1115, 610, 8],
            [1088, 548, 2], [445, 453, 6], [422, 500, 4], [467, 510, 6], [265, 590, 9], [277, 652, 5], [322, 668, 9],
            [433, 665, 5], [483, 683, 10], [542, 628, 5], [340, 738, 5], [175, 800, 13], [227, 780, 8], [268, 770, 6],
            [307, 775, 8], [35, 722, 3], [870, 742, 6], [835, 790, 5], [802, 838, 7], [873, 845, 10], [838, 875, 5],
            [912, 858, 3], [1232, 650, 6], [1265, 648, 6], [1210, 720, 9], [1203, 793, 4], [1387, 915, 5], [1188, 1147, 8],
            [1075, 1287, 7], [1105, 1268, 4], [990, 1312, 6], [1025, 1332, 5], [963, 1402, 11], [1000, 1418, 4],
            [873, 1370, 8], [825, 1368, 5], [53, 1405, 8], [1310, 1335, 2], [1348, 1318, 2], [742, 388, 7],
          ]}
        />
      </g>
      <g className="font-['Inter',sans-serif] text-[40px] font-semibold" strokeWidth="3">
        <text transform="translate(738 1946) rotate(-17)">09:28</text>
      </g>

      {/* lower right: jug, game pad, slippers, drink, tripod */}
      <g transform="translate(0 1740) scale(0.752 0.3333)">
        <Lines
          d={[
            "M1100 60C1110 120 1120 160 1115 210C1110 260 1115 285 1150 295C1175 305 1185 290 1185 260L1182 215L1118 205M1182 215C1200 160 1220 100 1240 60M1315 150C1270 110 1240 140 1230 220C1220 280 1200 340 1190 410C1185 460 1210 480 1240 450L1290 405L1315 415M1265 190L1280 175L1295 190L1315 195M1265 190L1262 225L1278 240L1285 280L1315 270M1270 340C1260 300 1290 290 1300 330C1305 370 1275 390 1270 340Z",
            "M1255 530C1245 480 1270 440 1300 460L1315 480M1255 530C1275 560 1270 510 1290 515C1310 530 1300 560 1290 600M1235 570L1295 640L1300 680M1235 570C1215 640 1200 700 1195 740C1210 780 1240 810 1260 805L1285 740L1300 660M1240 600L1290 660M1290 700C1310 720 1295 770 1275 780",
            "M1190 970C1200 950 1225 950 1230 1000C1240 1060 1250 1140 1260 1190C1250 1220 1230 1220 1220 1180L1190 1010ZM1195 1100L1215 1030L1230 1100M1275 960C1270 900 1290 830 1315 840C1340 860 1330 930 1325 980C1320 1050 1290 1080 1275 1050ZM1275 970L1300 920L1325 980",
            "M1350 980L1385 835L1440 830L1470 960M1360 985L1400 850M1430 985L1435 850M1440 985L1445 840M1480 960L1455 835M1495 955L1470 835",
            "M1325 1280H1405L1380 1450C1370 1480 1320 1480 1310 1450ZM1325 1280L1340 1185L1405 1240L1425 1260M1385 1200C1395 1150 1440 1140 1460 1200C1475 1270 1440 1340 1405 1330M1395 1210C1405 1175 1435 1175 1445 1220C1450 1270 1430 1310 1408 1305M1420 1190L1425 1300M1400 1220L1445 1270M1440 1210L1410 1290",
            "M1568 880C1540 900 1540 950 1568 980M1545 1410C1535 1450 1535 1500 1550 1520M1395 1500C1390 1440 1410 1400 1415 1400C1430 1440 1420 1490 1395 1500M1215 1520L1290 1475L1300 1520M1568 1080L1555 1110L1568 1140",
          ]}
        />
        <Star x={1255} y={1350} r={19} sx={1.33} />
        <Star x={1527} y={1278} r={18} sx={1.33} />
        <Dots
          sx={1.33}
          items={[
            [1410, 130, 9], [1480, 95, 8], [1505, 70, 8], [1530, 95, 6], [1192, 620, 6], [1150, 395, 8], [1162, 540, 4],
            [1225, 860, 6], [1252, 865, 4], [1180, 890, 5], [1175, 960, 6], [1198, 1190, 4], [1215, 1245, 6],
            [1292, 1255, 5], [1387, 1035, 5], [1480, 1030, 6], [1452, 1110, 5], [1520, 1170, 8], [1548, 1175, 5],
            [1477, 1370, 4], [1505, 1400, 7], [1355, 1310, 2], [1385, 1335, 2], [1358, 1380, 2], [1525, 935, 6], [1415, 25, 8],
          ]}
        />
      </g>
    </svg>
  );
}

function DoubleCheck() {
  return (
    <svg aria-label="已读" role="img" viewBox="0 0 34 20" className="h-5 w-[34px] fill-none stroke-[#4caf50]" strokeWidth="3">
      <path d="M1 10L9 18M9 10L16 17L32 1M14 10L24 1" />
    </svg>
  );
}

type Message = { lines: string[]; time: string; mine?: boolean; tail?: boolean; first?: boolean };

const messages: Message[] = [
  { lines: ["安排了，看下活动规则，好运"], time: "18:56" },
  {
    lines: ["老哥如果要充值的话记得先联系我 我给你送彩金", "我们这边的活动优惠力度很大的"],
    time: "18:56",
    tail: true,
  },
  { lines: ["送的玩什么游戏"], time: "18:59", mine: true, tail: true, first: true },
  { lines: ["随意"], time: "18:59", first: true },
  {
    lines: [
      "特邀回归彩金申请成功，十分钟内到账。118的彩金连续送二天（第二天的彩金需要完成一次存款后领取）1倍流水不限游戏，最低 200 提款，最高 1000 提款，当天仅限一次提款，提款后剩余的彩金会清零。彩金当日投注当日提款，超过当日清零！首次出款可以使用虚拟币（但不支持USDT）祝您好运。",
    ],
    time: "19:00",
    tail: true,
  },
  { lines: ["存多少", "第二天"], time: "19:39", mine: true, tail: true, first: true },
  { lines: ["最少存款300 明天送158"], time: "19:39", tail: true, first: true },
];

function Bubble({ lines, time, mine, tail, first }: Message) {
  return (
    <article
      className={clsx(
        "max-w-[90%] min-w-[138px] rounded-[40px] px-5 pt-[21px] pb-6",
        first ? "mt-[34px]" : "mt-[13px]",
        mine ? "self-end bg-[#3e78ff] text-white" : "self-start bg-white text-black",
        tail && (mine ? "rounded-br-none" : "rounded-bl-none"),
      )}
    >
      {lines.map((line) => (
        <p key={line} className="text-[45px] leading-[63px]">
          {line}
        </p>
      ))}
      <div className={clsx("mt-[18px] flex items-center gap-[14px] text-[33px] leading-9", mine ? "text-white" : "text-[#9a8fa8]")}>
        <time>{time}</time>
        {mine && <DoubleCheck />}
      </div>
    </article>
  );
}

function StatusBar() {
  return (
    <div className="flex h-44 items-center justify-between pr-[98px] pl-[148px]">
      <time className="text-[51px] leading-none font-semibold text-black">19:42</time>
      <div className="flex items-center">
        <svg aria-label="信号" role="img" viewBox="0 0 58 37" className="h-[37px] w-[58px] fill-black">
          <rect x="0" y="23" width="10" height="14" rx="3" />
          <rect x="16" y="16" width="10" height="21" rx="3" />
          <rect x="32" y="8" width="10" height="29" rx="3" />
          <rect x="48" y="0" width="10" height="37" rx="3" />
        </svg>
        <svg aria-label="无线网络" role="img" viewBox="0 0 51 37" className="ml-[22px] h-[37px] w-[51px] fill-black">
          <path d="M25.500 0C35.500 0 44 4 50.500 10.500L46 15.500C40 10 33.500 7.500 25.500 7.500S11 10 5 15.500L.5 10.500C7 4 15.500 0 25.500 0Z" />
          <path d="M25.500 13C32 13 37.500 15.500 42 19.500L37 25C33.500 22 30 20.500 25.500 20.500S17.500 22 14 25L9 19.500C13.500 15.500 19 13 25.500 13Z" />
          <path d="M25.500 26C28.500 26 31 27 33.500 29L25.500 37L17.500 29C20 27 22.500 26 25.500 26Z" />
        </svg>
        <div className="ml-[22px] flex items-center gap-[3px]">
          <div className="relative flex h-[41px] w-[75px] items-center overflow-hidden rounded-[13px] bg-[#b2b2b2]">
            <div className="absolute inset-y-0 left-0 w-[87%] bg-[#34c759]" />
            <span className="relative pl-[6px] text-[36px] leading-none font-bold text-white">86</span>
            <svg aria-hidden="true" viewBox="0 0 18 26" className="absolute right-[4px] h-[26px] w-[18px] fill-white">
              <path d="M12.500 0L1 14.500H7.500L4.500 25.500L17 10H10.500Z" />
            </svg>
          </div>
          <div className="h-3 w-1 rounded-r-full bg-[#b2b2b2]" />
        </div>
      </div>
    </div>
  );
}

export default function App() {
  return (
    <div
      lang="zh-CN"
      className="relative flex h-dvh flex-col overflow-hidden bg-[#fafaff] font-['Inter','Noto_Sans_CJK_SC',sans-serif]"
    >
      <header className="shrink-0 bg-white">
        <StatusBar />
        <div className="flex h-[169px] items-center pr-[46px] pl-[66px]">
          <button type="button" aria-label="返回">
            <svg aria-hidden="true" viewBox="0 0 36 60" className="h-[60px] w-9 fill-none stroke-black" strokeWidth="7" strokeLinecap="round" strokeLinejoin="round">
              <path d="M31 5L5 30L31 55" />
            </svg>
          </button>
          <div className="ml-[114px] flex size-[132px] shrink-0 items-center justify-center rounded-full bg-[#8bc34a] text-[53px] font-light text-white">
            雷
          </div>
          <div className="ml-10 min-w-0 flex-1">
            <h1 className="truncate text-[37px] leading-[50px] font-semibold text-black">雷火-陈理想-上班中-</h1>
            <p className="text-[33px] leading-[42px] font-light text-[#909090]">3分前</p>
          </div>
          <button type="button" aria-label="更多">
            <svg aria-hidden="true" viewBox="0 0 52 12" className="h-3 w-[52px] fill-[#21103a]">
              <circle cx="6" cy="6" r="6" />
              <circle cx="26" cy="6" r="6" />
              <circle cx="46" cy="6" r="6" />
            </svg>
          </button>
        </div>
      </header>

      <main className="relative flex min-h-0 flex-1 flex-col justify-end overflow-hidden bg-[#f5f5f5] px-4 pb-8">
        <Wallpaper />
        <div className="relative flex flex-col">
          <article className="w-[1039px] max-w-full rounded-b-[40px] bg-white px-5 pb-[29px]">
            <time className="block text-[33px] leading-[26px] text-[#9a8fa8]">18:56</time>
          </article>
          {messages.map((m) => (
            <Bubble key={m.lines[0]} {...m} />
          ))}
        </div>
        <div className="absolute top-4 left-1/2 flex h-[85px] -translate-x-1/2 items-center rounded-[20px] bg-[#f7f5fa] px-8 text-[32px] font-medium text-black">
          今天
        </div>
      </main>

      <footer className="relative shrink-0 pb-[102px]">
        <form className="flex h-52 items-center gap-[34px] bg-[#f0f4fc] px-[33px] shadow-[0_-4px_24px_rgba(0,0,0,0.18)]" onSubmit={(e) => e.preventDefault()}>
          <input
            type="text"
            aria-label="消息"
            placeholder="消息"
            className="h-[134px] min-w-0 flex-1 rounded-[25px] bg-white px-5 text-[37px] text-black outline-none placeholder:text-[#cac4d4]"
          />
          <button type="button" aria-label="表情" className="flex size-[116px] items-center justify-center rounded-full bg-[#e6e8f1]">
            <svg aria-hidden="true" viewBox="0 0 54 54" className="size-[54px] fill-none stroke-[#21103a]" strokeWidth="5" strokeLinecap="round">
              <circle cx="27" cy="27" r="24" />
              <path d="M17 32C21 39 33 39 37 32M19 20V22M35 20V22" />
            </svg>
          </button>
          <button type="button" aria-label="添加" className="flex size-[116px] items-center justify-center rounded-full bg-[#e6e8f1]">
            <svg aria-hidden="true" viewBox="0 0 54 54" className="size-[54px] stroke-[#21103a]" strokeWidth="5" strokeLinecap="round">
              <path d="M27 3V51M3 27H51" />
            </svg>
          </button>
        </form>
      </footer>

      <aside className="absolute right-[10px] bottom-6 flex h-[206px] w-[378px] items-center justify-center border border-[#c4c4c4] bg-white">
        <span className="bg-[linear-gradient(115deg,#8d600c_0%,#c8932a_10%,#9a6a12_18%,#e8bb55_27%,#a9700f_36%,#d99a2b_46%,#b9790f_54%,#f0d080_62%,#c98d24_70%,#edc562_76%,#a8741a_83%,#75490a_90%,#c8912c_100%)] bg-clip-text px-2 font-['Noto_Sans_CJK_SC',sans-serif] text-[96px] leading-[120px] font-black text-transparent italic">
          迷人牌
        </span>
      </aside>
    </div>
  );
}
